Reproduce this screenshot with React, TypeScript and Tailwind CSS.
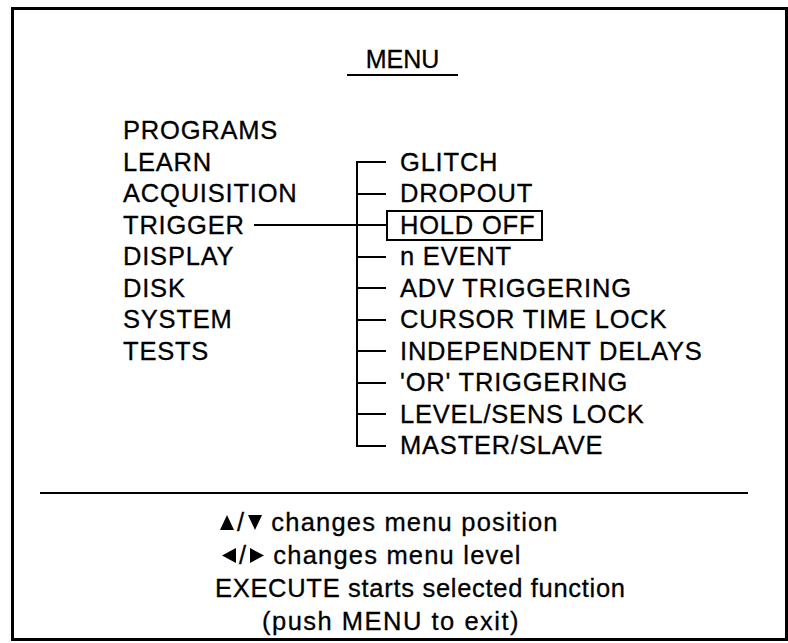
import React from "react";

const MAIN = ["PROGRAMS", "LEARN", "ACQUISITION", "TRIGGER", "DISPLAY", "DISK", "SYSTEM", "TESTS"];

const SUB = [
  "GLITCH",
  "DROPOUT",
  "HOLD OFF",
  "n EVENT",
  "ADV TRIGGERING",
  "CURSOR TIME LOCK",
  "INDEPENDENT DELAYS",
  "'OR' TRIGGERING",
  "LEVEL/SENS LOCK",
  "MASTER/SLAVE",
];

const font = { fontFamily: '"Liberation Sans", Arial, sans-serif' };

function Tri({ dir }: { dir: "up" | "down" | "left" | "right" }) {
  const pts = {
    up: "0,15 7,0 14,15",
    down: "0,0 14,0 7,15",
    left: "14,0 14,15 0,7.5",
    right: "0,0 14,7.5 0,15",
  }[dir];
  return (
    <svg width="14" height="15" viewBox="0 0 14 15" className="inline-block">
      <polygon points={pts} fill="black" />
    </svg>
  );
}

export default function App() {
  const rows = Array.from({ length: 11 }, (_, i) => i);

  return (
    <div
      className="w-[788px] h-[643px] bg-white pt-[7px] pl-[11px] pb-[2px] text-black [-webkit-text-stroke:0.3px_black]"
      style={font}
    >
      <div className="h-full border-[3px] border-black flex flex-col">
        {/* title */}
        <div className="pt-[35px] flex justify-center">
          <span className="px-[19px] border-b-2 border-black text-[25px] leading-[29px] ml-[6px]">MENU</span>
        </div>

        {/* menu tree */}
        <div className="mt-[39px] pl-[109px] flex flex-col text-[25.5px] tracking-[0.8px]">
          {rows.map((i) => {
            const main = MAIN[i];
            const sub = i >= 1 ? SUB[i - 1] : undefined;
            const first = i === 1;
            const last = i === 10;
            const selected = sub === "HOLD OFF";
            return (
              <div key={i} className="flex h-[31.5px] items-stretch">
                <div className="w-[233px] flex items-center">
                  {main && <span className="leading-[31.5px] whitespace-nowrap">{main}</span>}
                  {main === "TRIGGER" && <div className="flex-1 ml-[9px] h-[2px] bg-black" />}
                </div>
                {sub && (
                  <>
                    <div className="w-[30px] relative flex items-center">
                      <div
                        className={
                          "absolute left-0 w-[2px] bg-black " +
                          (first ? "top-1/2 bottom-0" : last ? "top-0 bottom-1/2" : "top-0 bottom-0")
                        }
                      />
                      <div className="w-full h-[2px] bg-black" />
                    </div>
                    <span
                      className={
                        "border-2 pl-[12px] pr-[6px] leading-[27.5px] whitespace-nowrap " +
                        (selected ? "border-black" : "border-transparent")
                      }
                    >
                      {sub}
                    </span>
                  </>
                )}
              </div>
            );
          })}
        </div>

        {/* divider */}
        <div className="mt-[30px] ml-[26px] mr-[37px] h-[2px] bg-black" />

        {/* help text */}
        <div className="mt-[12px] flex flex-col items-start text-[25.5px] leading-[33px]">
          <div className="ml-[206px] flex items-center gap-[3px] tracking-[1.2px]">
            <Tri dir="up" />
            <span>/</span>
            <Tri dir="down" />
            <span className="ml-[6px]">changes menu position</span>
          </div>
          <div className="ml-[208px] flex items-center gap-[3px] tracking-[1.2px]">
            <Tri dir="left" />
            <span>/</span>
            <Tri dir="right" />
            <span className="ml-[6px]">changes menu level</span>
          </div>
          <div className="ml-[201px] tracking-[0.7px]">EXECUTE starts selected function</div>
          <div className="ml-[248px] tracking-[1.5px]">(push MENU to exit)</div>
        </div>
      </div>
    </div>
  );
}
